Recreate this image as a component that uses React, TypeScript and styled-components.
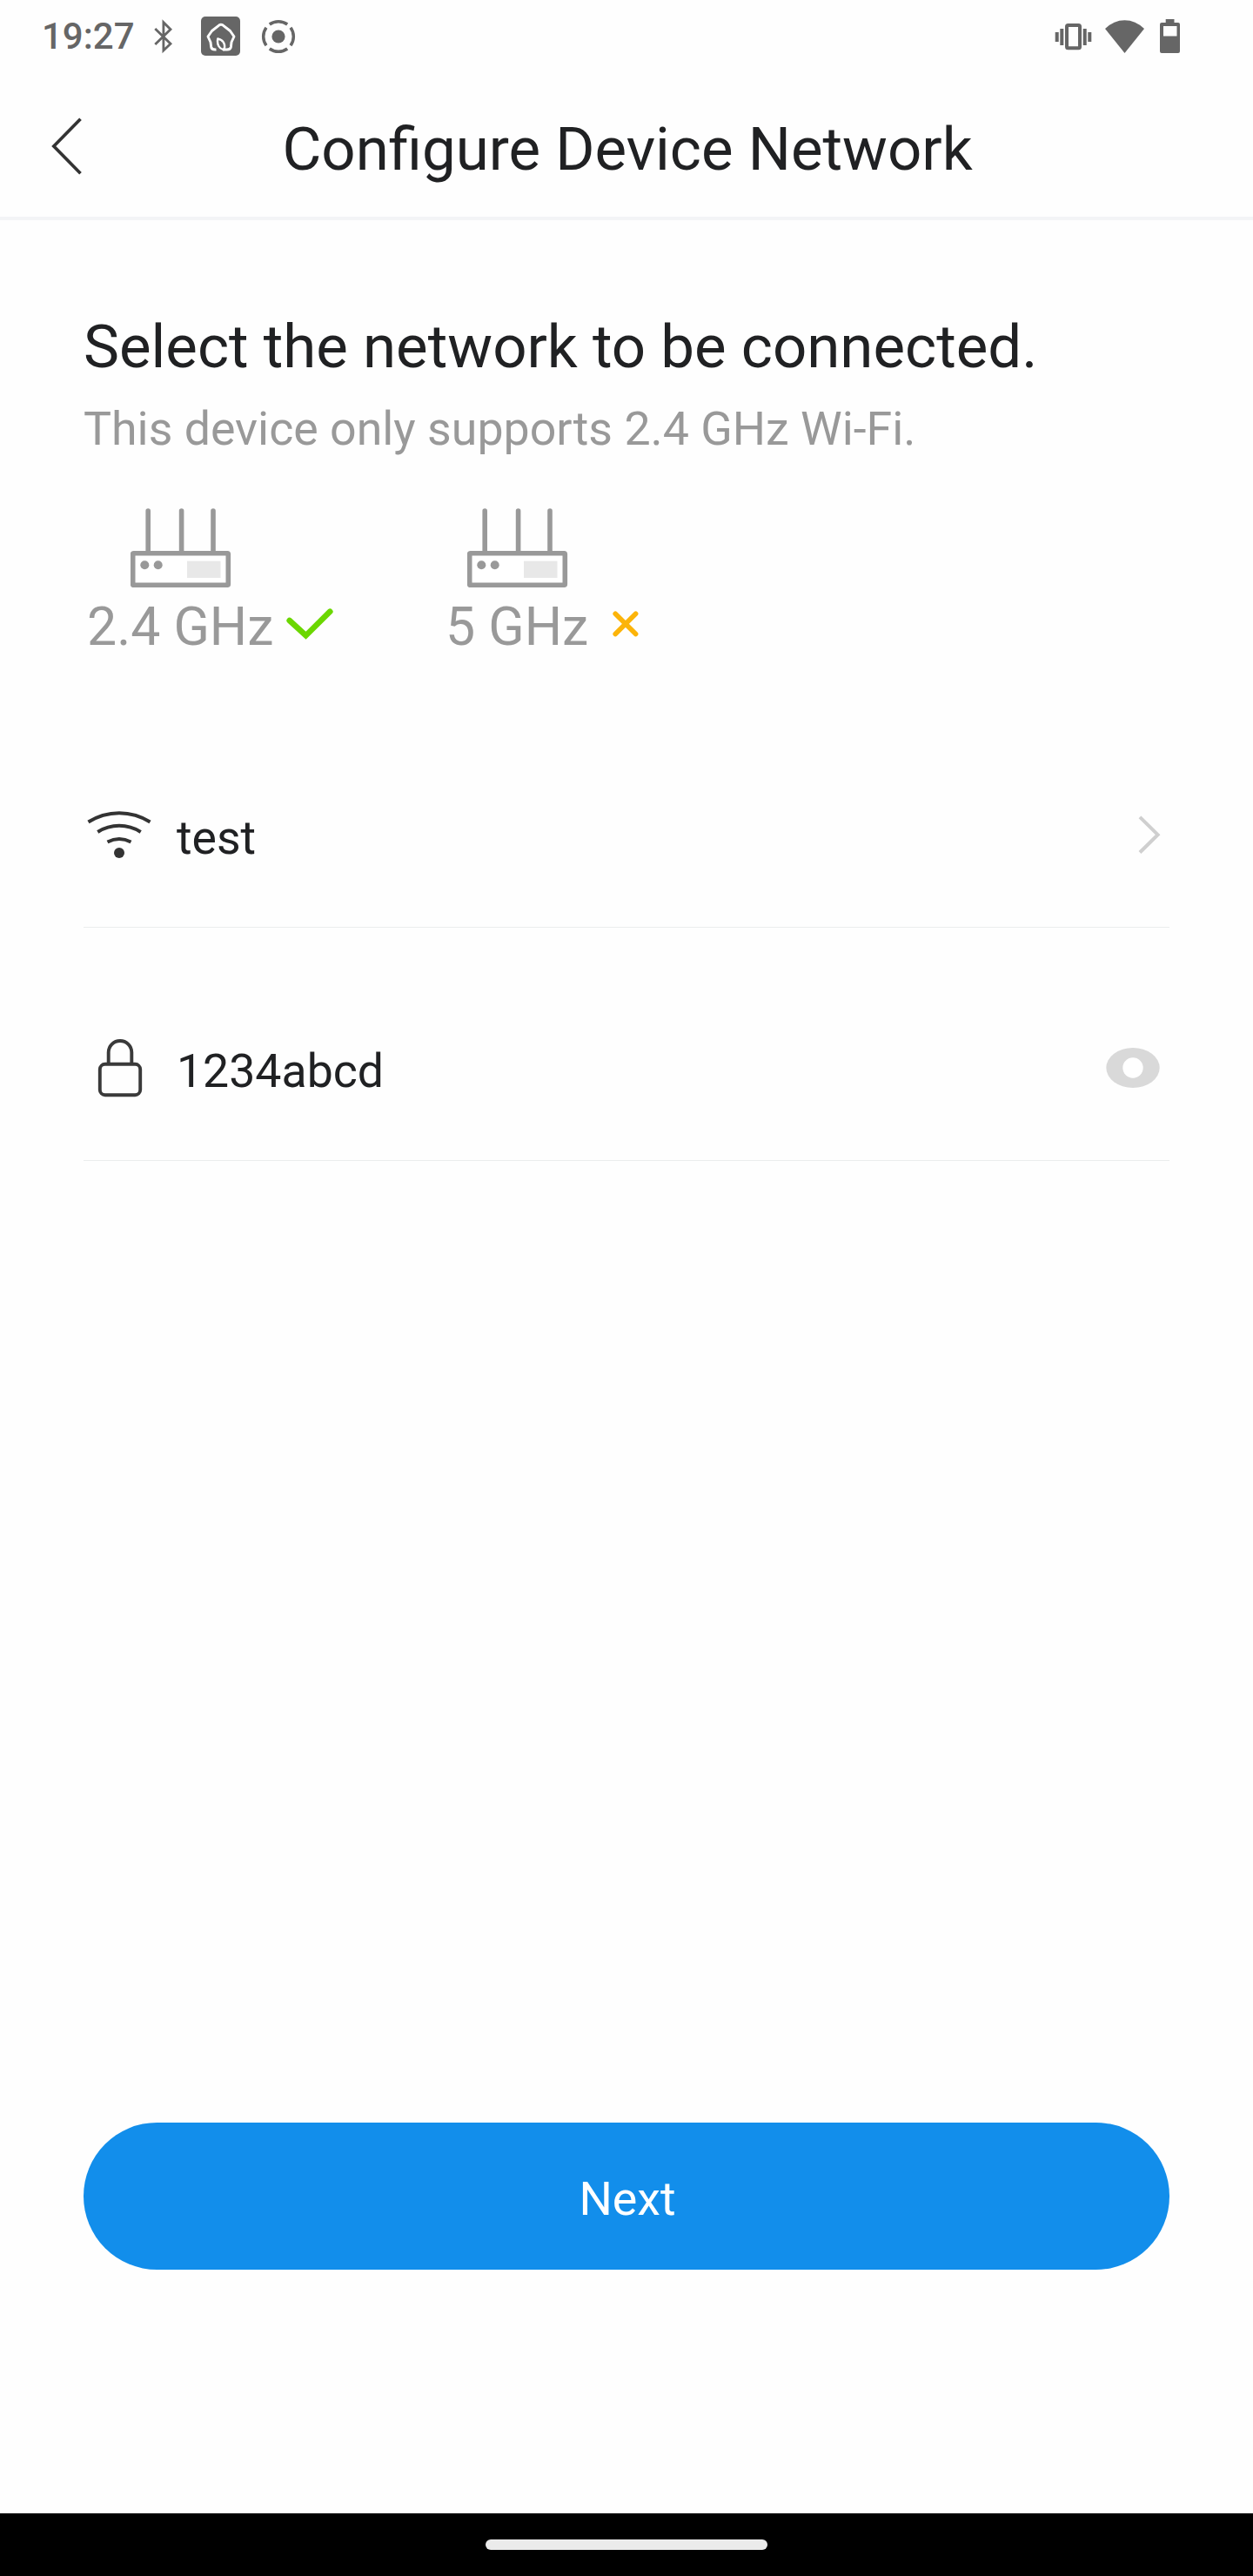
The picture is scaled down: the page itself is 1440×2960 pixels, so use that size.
import React from 'react';
import styled, { createGlobalStyle } from 'styled-components';

const GlobalStyle = createGlobalStyle`
  * { box-sizing: border-box; }
  body { margin: 0; background: #fefefe; }
  svg { display: block; flex: none; }
`;

const Screen = styled.div`
  display: flex;
  flex-direction: column;
  width: 1440px;
  height: 2960px;
  background: #fefefe;
  color: #202123;
  font-family: Roboto, sans-serif;
  white-space: nowrap;
`;

const StatusBar = styled.div`
  display: flex;
  justify-content: space-between;
  height: 84px;
  padding: 0 83px 0 48px;
  color: #666;
`;

const StatusGroup = styled.div`
  display: flex;
  align-items: center;
`;

const StatusIcon = styled.span<{ $before: number }>`
  margin-left: ${(p) => p.$before}px;
`;

const Clock = styled.span`
  width: 108px;
  font-size: 42px;
  font-weight: 500;
  line-height: 84px;
`;

const Header = styled.header`
  display: grid;
  grid-template-columns: 40px 1fr 40px;
  align-items: center;
  height: 169px;
  padding: 0 57px;
  border-bottom: 4px solid #f3f4f6;
`;

const BackButton = styled.button`
  display: flex;
  padding: 3px 0 0;
  border: 0;
  background: none;
`;

const Title = styled.h1`
  margin: 0;
  padding: 10px 0 0 2px;
  font-size: 69px;
  font-weight: 400;
  line-height: 85px;
  text-align: center;
`;

const Main = styled.main`
  display: flex;
  flex-direction: column;
  flex: 1;
  padding: 103px 96px 0;
`;

const Heading = styled.h2`
  margin: 0;
  font-size: 69px;
  font-weight: 400;
  line-height: 85px;
`;

const Hint = styled.p`
  margin: 18px 0 0;
  color: #999;
  font-size: 53.7px;
  line-height: 68px;
`;

const Bands = styled.div`
  display: flex;
  height: 166px;
  margin-top: 57px;
`;

const Band = styled.div<{ $width: number }>`
  width: ${(p) => p.$width}px;
`;

const RouterBox = styled.div<{ $indent: number }>`
  padding-left: ${(p) => p.$indent}px;
`;

const BandLabel = styled.div<{ $indent: number; $gap: number }>`
  display: flex;
  align-items: center;
  gap: ${(p) => p.$gap}px;
  height: 80px;
  margin-top: 4px;
  padding-left: ${(p) => p.$indent}px;
  color: #999;
  font-size: 60.8px;

  svg {
    margin-bottom: 6px;
  }
`;

const Field = styled.div<{ $height: number }>`
  display: flex;
  align-items: flex-end;
  height: ${(p) => p.$height}px;
  padding-bottom: 68px;
  border-bottom: 1px solid #ebeded;
`;

const FieldIcon = styled.div`
  display: flex;
  align-items: center;
  width: 107px;
  height: 76px;
`;

const FieldText = styled.span`
  flex: 1;
  font-size: 53.6px;
  line-height: 69px;
`;

const FieldAction = styled.div`
  display: flex;
  align-items: center;
  height: 76px;
  padding-right: 10px;
`;

const NextButton = styled.button`
  height: 169px;
  margin: auto 0 280px;
  padding: 6px 0 0 2px;
  border: 0;
  border-radius: 85px;
  background: #128eeb;
  color: #fff;
  font-family: inherit;
  font-size: 53.8px;
  line-height: 76px;
`;

const NavBar = styled.div`
  display: flex;
  align-items: center;
  justify-content: center;
  height: 72px;
  background: #000;
`;

const NavPill = styled.div`
  width: 324px;
  height: 12px;
  border-radius: 6px;
  background: #ebebeb;
`;

const BluetoothIcon = () => (
  <svg width="24" height="42" viewBox="176 21 24 42" fill="none" stroke="#666" strokeWidth="2.8">
    <path d="M178.3 33 L196 50.3 L187.9 58 V25.7 L196 33.7 L178.3 51" strokeMiterlimit="10" />
  </svg>
);

const HomeAppIcon = () => (
  <svg width="45" height="46" viewBox="231 19 45 46" fill="none">
    <rect x="231" y="19" width="45" height="45" rx="5" fill="#666" />
    <g stroke="#fff" strokeWidth="2.9" strokeLinejoin="round">
      <path d="M248.5 57 C244.5 57.3 243 56.5 242.7 54 L242 48.5 L239 42 L243.5 35.5 L252 28.8 Q254 27.6 256 28.8 L264.5 35.5 L269 42 L266 48.5 L265.4 54 C265 56.5 263.5 57.2 260 57 L256 57" />
      <path d="M250.3 44.5 C256.5 45.5 259.5 51 257.5 57 C252 56.5 249 51 250.3 44.5 Z" strokeWidth="2.4" />
    </g>
  </svg>
);

const RecordIcon = () => (
  <svg width="40" height="40" viewBox="-20 -20 40 40" fill="none">
    <circle r="7.6" fill="#666" />
    {[0, 90, 180, 270].map((angle) => (
      <path key={angle} d="M-10.2 -14 A17.3 17.3 0 0 1 10.2 -14" stroke="#666" strokeWidth="3.5" transform={`rotate(${angle})`} />
    ))}
  </svg>
);

const VibrateIcon = () => (
  <svg width="43" height="32" viewBox="1212 26 43 32" fill="#666">
    <rect x="1226" y="29" width="15" height="26.3" rx="1.5" fill="none" stroke="#666" strokeWidth="4" />
    <path d="M1218.3 33h4v19h-4zM1212.7 37h4v11h-4zM1244.7 33h4v19h-4zM1250.3 37h4v11h-4z" />
  </svg>
);

const SignalIcon = () => (
  <svg width="47" height="41" viewBox="1269 21.5 47 41" fill="#666">
    <path d="M1270 32.5 Q1280 22.7 1292.5 22.7 T1315 32.5 L1292.5 60.5 Z" />
  </svg>
);

const BatteryIcon = () => (
  <svg width="24" height="40" viewBox="1333 22 24 40" fill="#666" fillRule="evenodd">
    <path d="M1339.7 22h9.8v4h4.5a2 2 0 0 1 2 2v31a2 2 0 0 1-2 2h-19a2 2 0 0 1-2-2v-31a2 2 0 0 1 2-2h4.7zM1337 30v11.5h15.5v-11.5z" />
  </svg>
);

const BackIcon = () => (
  <svg width="40" height="70" viewBox="57 133 40 70" fill="none" stroke="#333" strokeWidth="3.7">
    <path d="M92.5 136.7 L61.8 168 L92.5 199.3" />
  </svg>
);

const RouterIcon = () => (
  <svg width="116" height="92" viewBox="150 584 116 92" fill="none" stroke="#999">
    <path d="M170.2 634V587M208.6 634V587M245 634V587" strokeWidth="5.6" strokeLinecap="round" />
    <rect x="152.7" y="635.7" width="109.6" height="36.6" rx="1" fill="#fff" strokeWidth="5.6" />
    <circle cx="166.3" cy="649.3" r="5" fill="#999" stroke="none" />
    <circle cx="181.7" cy="649.3" r="5" fill="#999" stroke="none" />
    <rect x="215" y="644.7" width="38.5" height="19.3" fill="#e8e8e8" stroke="none" />
  </svg>
);

const CheckIcon = () => (
  <svg width="56" height="38" viewBox="328 698 56 38" fill="none" stroke="#6bd700" strokeWidth="6.6" strokeLinecap="round">
    <path d="M332.7 713 L351.5 730.3 L379.3 702.7" />
  </svg>
);

const CrossIcon = () => (
  <svg width="32" height="32" viewBox="702 701 32 32" fill="none" stroke="#fcb409" strokeWidth="5.6" strokeLinecap="round">
    <path d="M706.2 705.2 L729.6 728.6 M729.6 705.2 L706.2 728.6" />
  </svg>
);

const WifiIcon = () => (
  <svg width="82" height="56" viewBox="96 931 82 56" fill="none" stroke="#333" strokeWidth="4">
    <path d="M101.5 944.5 A66 66 0 0 1 172.5 944.5 M112.3 956 A46 46 0 0 1 161.7 956 M123.5 967.5 A30 30 0 0 1 150.5 967.5" />
    <circle cx="137" cy="980" r="6" fill="#333" stroke="none" />
  </svg>
);

const LockIcon = () => (
  <svg width="82" height="68" viewBox="96 1193 82 68" fill="none" stroke="#3a3a3a" strokeWidth="3.9">
    <rect x="114.8" y="1222.8" width="46.4" height="35.4" rx="6" />
    <path d="M124.7 1222 V1209.3 A13.3 13.3 0 0 1 151.3 1209.3 V1222" />
  </svg>
);

const ChevronIcon = () => (
  <svg width="26" height="46" viewBox="1308 936 26 46" fill="none" stroke="#cfcfcf" strokeWidth="4">
    <path d="M1310 938.9 L1330.6 959.2 L1310 979.5" />
  </svg>
);

const EyeIcon = () => (
  <svg width="63" height="48" viewBox="1271 1203 63 48">
    <ellipse cx="1302" cy="1227" rx="30.7" ry="23" fill="#d9d9d9" />
    <circle cx="1302" cy="1227" r="11.7" fill="#fff" />
  </svg>
);

export default function App() {
  return (
    <Screen>
      <GlobalStyle />
      <StatusBar>
        <StatusGroup>
          <Clock>19:27</Clock>
          <StatusIcon $before={20}>
            <BluetoothIcon />
          </StatusIcon>
          <StatusIcon $before={31}>
            <HomeAppIcon />
          </StatusIcon>
          <StatusIcon $before={24}>
            <RecordIcon />
          </StatusIcon>
        </StatusGroup>
        <StatusGroup>
          <VibrateIcon />
          <StatusIcon $before={14}>
            <SignalIcon />
          </StatusIcon>
          <StatusIcon $before={17}>
            <BatteryIcon />
          </StatusIcon>
        </StatusGroup>
      </StatusBar>
      <Header>
        <BackButton aria-label="Back">
          <BackIcon />
        </BackButton>
        <Title>Configure Device Network</Title>
      </Header>
      <Main>
        <Heading>Select the network to be connected.</Heading>
        <Hint>This device only supports 2.4 GHz Wi-Fi.</Hint>
        <Bands>
          <Band $width={416}>
            <RouterBox $indent={54}>
              <RouterIcon />
            </RouterBox>
            <BandLabel $indent={4} $gap={14}>
              2.4 GHz
              <CheckIcon />
            </BandLabel>
          </Band>
          <Band $width={300}>
            <RouterBox $indent={25}>
              <RouterIcon />
            </RouterBox>
            <BandLabel $indent={0} $gap={27}>
              5 GHz
              <CrossIcon />
            </BandLabel>
          </Band>
        </Bands>
        <Field $height={316}>
          <FieldIcon>
            <WifiIcon />
          </FieldIcon>
          <FieldText>test</FieldText>
          <FieldAction>
            <ChevronIcon />
          </FieldAction>
        </Field>
        <Field $height={268}>
          <FieldIcon>
            <LockIcon />
          </FieldIcon>
          <FieldText>1234abcd</FieldText>
          <FieldAction>
            <EyeIcon />
          </FieldAction>
        </Field>
        <NextButton>Next</NextButton>
      </Main>
      <NavBar>
        <NavPill />
      </NavBar>
    </Screen>
  );
}
